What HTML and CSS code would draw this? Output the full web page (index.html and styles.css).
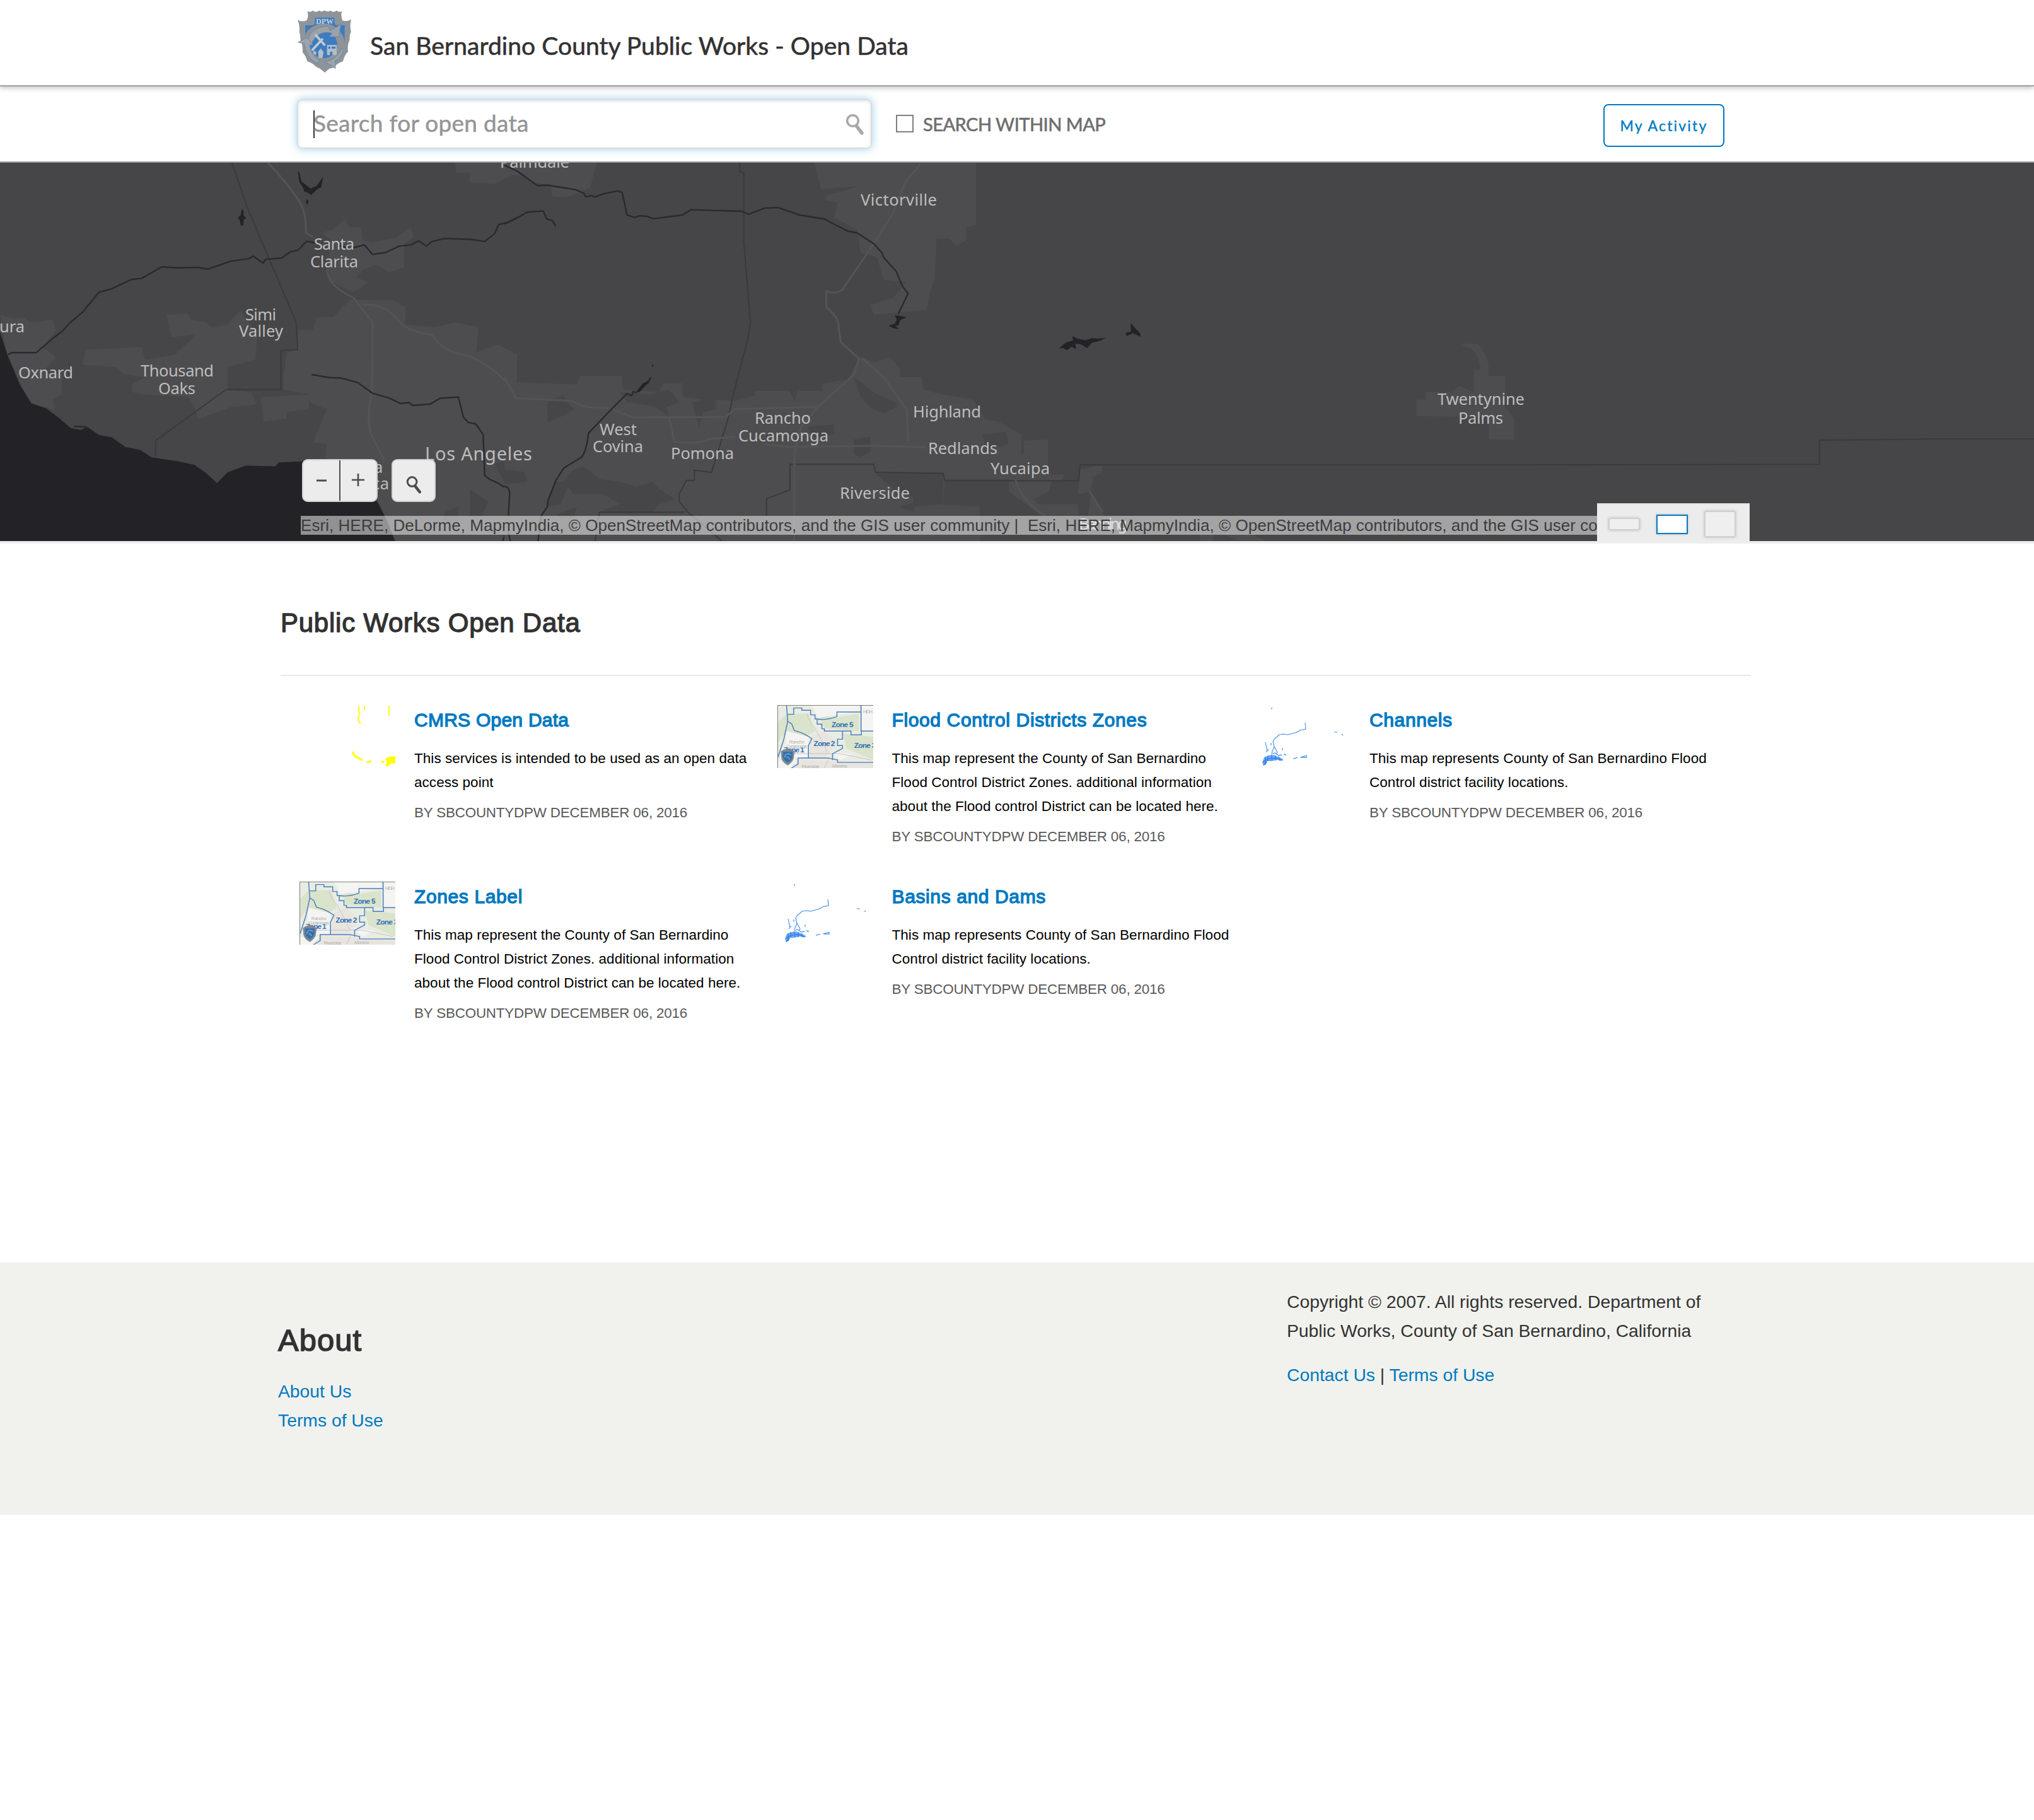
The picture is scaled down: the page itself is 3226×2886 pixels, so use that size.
FILE: index.html
```html
<!DOCTYPE html>
<html lang="en">
<head>
<meta charset="utf-8">
<title>San Bernardino County Public Works - Open Data</title>
<link rel="stylesheet" href="styles.css">
</head>
<body>
<svg class="defs" width="0" height="0" aria-hidden="true">
  <defs>
    <symbol id="badge" viewBox="0 0 330 390">
      <path fill="#8e9499" d="M82 53Q98 60 108 50Q124 62 138 50Q152 60 165 49Q178 60 192 50Q206 62 222 50Q232 60 247 54Q240 76 250 98Q272 104 291 92Q283 122 290 150Q282 168 284 190Q272 212 276 246Q258 262 252 292Q226 300 206 322Q184 324 166 346Q148 326 124 318Q108 300 82 292Q76 266 60 250Q62 216 50 190Q50 168 44 150Q48 122 36 94Q58 108 80 96Q90 76 82 53Z"/>
      <path fill="#3d7cc0" d="M118 84H212V108Q212 120 226 120H260V200Q254 270 166 312Q78 270 72 200V120H104Q118 120 118 108Z"/>
      <circle cx="160" cy="212" r="82" fill="none" stroke="#8e9499" stroke-width="36"/>
      <circle cx="160" cy="212" r="64" fill="#3d7cc0"/>
      <path fill="#9da3a8" stroke="#4f7fb3" stroke-width="2" d="M84 190Q102 128 180 124L192 146L242 116L232 176L186 174L200 158Q130 140 100 214Z"/>
      <path fill="#9da3a8" stroke="#4f7fb3" stroke-width="2" d="M38 202L78 178L112 214L92 214Q98 262 140 286L128 302Q76 274 68 208Z"/>
      <path fill="#9da3a8" stroke="#4f7fb3" stroke-width="2" d="M168 294Q226 282 246 230L254 236Q246 272 216 288V326Q194 310 168 294Z"/>
      <path stroke="#c3cad0" stroke-width="11" d="M120 164L166 216M156 184L104 240"/>
      <path fill="#b4bec8" d="M134 246L146 230L160 248L154 276H136ZM176 214H222V262H202V246H190V262H176ZM112 240L126 248L122 262L110 254Z"/>
      <path fill="#3d7cc0" d="M182 222H192V232H182ZM198 222H216V232H198Z"/>
      <text x="165" y="115" class="badge-text" text-anchor="middle">DPW</text>
    </symbol>
    <symbol id="lens" viewBox="0 0 30 34">
      <circle cx="11.5" cy="11.5" r="8.8" fill="none" stroke="currentColor" stroke-width="3.6"/>
      <path d="M17.5 20L26 31" fill="none" stroke="currentColor" stroke-width="5.4" stroke-linecap="round"/>
    </symbol>
    <symbol id="zones" viewBox="0 0 306 218" preserveAspectRatio="none">
      <rect width="306" height="218" fill="#e9ece2"/>
      <path fill="#dae3cb" d="M0 60L30 30L100 30L120 90L90 110L30 90L0 130ZM210 100L306 110V190L220 150ZM130 30L180 45L260 30V90L150 80Z"/>
      <path fill="#f4f4f2" d="M110 0H260V22L130 44ZM30 90L100 110V180L20 185ZM270 0H306V90H270ZM170 160L240 170L200 190ZM0 190H60V218H0Z"/>
      <path fill="#e8e5df" d="M104 110L150 90L190 130L150 185L104 182ZM70 188L306 200V218H40Z"/>
      <path fill="none" stroke="#c9bfd0" stroke-width="2" d="M95 30Q100 60 120 80L140 120L160 165M30 168H200L300 190M150 218L165 180"/>
      <path fill="none" stroke="#4a7fc0" stroke-width="3" d="M29 0L33 56L20 120L2 180M33 32H52V10H78V18H106V34H120V48H127V66H142V82H150V90H235V103H268V90M127 48Q150 54 190 40V24H267M267 0V90H306M33 56L46 66L54 88L78 96L92 104L110 116L99 140V183M208 90V118H192V140H208V150L176 168V190M45 218L66 204V183H160L192 190V198H306"/>
      <path d="M0 1H306M1 0V218" stroke="#777" stroke-width="2"/>
      <text x="173" y="77" class="zone" textLength="70">Zone 5</text>
      <text x="116" y="142" class="zone" textLength="68">Zone 2</text>
      <text x="245" y="148" class="zone" textLength="70">Zone 3</text>
      <text x="20" y="164" class="zone" textLength="66">Zone 1</text>
      <text x="38" y="134" class="place" textLength="48">Rancho</text>
      <text x="28" y="148" class="place" textLength="66">Cucamonga</text>
      <text x="78" y="217" class="place" textLength="56">Riverside</text>
      <text x="175" y="216" class="place" textLength="48">Moreno</text>
      <text x="274" y="28" class="place" textLength="30">HIGH</text>
      <path fill="#7c8790" d="M11 160L20 154L33 150L46 154L55 160L52 184Q48 198 33 209Q16 198 13 184Z"/>
      <path fill="#2f71b4" d="M18 162H48V180Q44 194 33 199Q20 192 18 180Z"/>
      <path fill="none" stroke="#8fa3b5" stroke-width="3" d="M24 182Q22 170 34 168L44 172M30 178L40 188"/>
    </symbol>
    <symbol id="channels" viewBox="0 0 152 100">
      <path fill="none" stroke="#3d8bf0" stroke-width="1.1" d="M27 4V7M80 28L81 38L72 40L67 43L60 45L52 47L46 46L39 47L36 50L31 54L29 58L31 66L27 76M31 66L36 75L34 78M17 59L18 64L20 72L18 75L22 70M26 60V64M44 68V72M126 43H131M138 46L140 48"/>
      <path fill="none" stroke="#4d94f2" stroke-width="1.3" d="M26 78L32 76L38 80L43 79M46 78L50 79M61 85L68 83M72 83L82 80V83L74 83"/>
      <path fill="#6ba7f6" d="M15 83L22 80L30 79L37 82L42 84L46 87L40 88L36 87L26 89L20 89L18 94L14 96L12 91Z"/>
      <path stroke="#2676e6" stroke-width="1.1" fill="none" d="M17 82V94M21 80V89M26 79L28 88M33 80V88M38 82L40 88M13 90L22 85L34 84L44 88M14 95L19 90"/>
    </symbol>
    <symbol id="cmrs" viewBox="0 0 152 100">
      <path fill="none" stroke="#ffff00" stroke-width="1.8" d="M94 1V10L96 14L93 20L94 26L97 30M103 1V8M142 1V17"/>
      <path fill="none" stroke="#ffff00" stroke-width="3" d="M84 74L87 80L93 84L100 87M107 91L114 89M130 90H134"/>
      <path fill="#ffff00" d="M136 85L142 82L152 81V92L144 93L139 98L136 95L139 91Z"/>
    </symbol>
  </defs>
</svg>

<header class="site-header">
  <svg class="logo"><use href="#badge"/></svg>
  <h1 class="site-title">San Bernardino County Public Works - Open Data</h1>
</header>

<section class="search-bar">
  <div class="search-box">
    <span class="caret"></span>
    <span class="placeholder">Search for open data</span>
    <svg class="search-icon"><use href="#lens"/></svg>
  </div>
  <label class="within"><span class="checkbox"></span><span class="within-text">SEARCH WITHIN MAP</span></label>
  <a class="activity">My Activity</a>
</section>

<section class="map">
  <svg class="map-canvas" viewBox="0 258 3226 600">
    <!-- western tile -->
    <g transform="translate(0 250) scale(.523 .3954)">
      <path class="urban" d="M0 630L40 645L70 640L90 660L160 650L170 690L130 760L170 800L130 860L190 870L185 950L160 970L165 1010L90 985L20 780ZM505 630L570 625L580 650L625 660L640 680L690 670L730 610L780 710L775 810L690 840L690 930L760 940L780 990L700 1000L600 1050L590 1000L570 960L440 950L400 940L400 910L440 880L380 870L350 840L250 830L260 770L430 760L440 810L530 790L580 730L590 710L520 720ZM790 960L940 950L935 1010L870 1020V1045L800 1060ZM950 690L960 640L1010 640L1060 570L1190 570L1230 600L1230 670L1320 680L1380 660L1450 680L1445 780L1510 750L1568 790V1538H1200L1145 1380V1209H985L990 1150L950 1140L990 1010L940 980L940 950L860 930V880L870 780L900 770L905 690ZM975 300L1010 290L1045 245L1060 280L1095 280L1100 330L1130 340L1200 320L1245 280L1255 320L1225 345L1225 440L1180 460L1140 430L1100 450L1080 480L1120 500L1070 540L1010 500L985 440L1010 340ZM1380 20H1568V60L1500 105L1425 100V60H1385Z"/>
      <path class="hill" d="M1425 1330L1480 1380L1460 1440L1425 1440ZM1350 1420L1390 1400V1460H1340ZM1500 1230L1568 1200V1290L1530 1300Z"/>
      <path class="water" d="M0 700L15 760L25 800L60 910L95 985L140 1005L180 1045L215 1085L245 1092L265 1080L300 1112L340 1122L380 1160L425 1172L460 1202L540 1218L590 1232L625 1265L658 1305L690 1262L745 1235L835 1238L845 1222L920 1218L1010 1290L1145 1380L1175 1460L1198 1538H0Z"/>
      <path class="water" d="M903 55L908 60L914 95L942 124L960 114L980 76L974 120L964 124L944 150L932 140L922 136L920 122L908 98ZM733 205L740 215L738 230L746 242L739 250L738 272L730 272L727 250L721 242L730 230ZM930 165L936 175L932 190L928 180Z"/>
      <path class="border" d="M703 20L750 200L898 660L903 770L852 774V930H685L472 1135V1200"/>
      <path class="road" d="M812 20Q870 100 905 170Q928 210 928 300L950 320M990 450Q1000 520 1070 560L1130 660L1128 940Q1110 1050 1125 1110L1165 1210M1100 590Q1170 580 1220 670Q1250 700 1310 710Q1340 780 1420 795Q1500 840 1540 910L1568 950"/>
      <path class="river" d="M25 790L35 782H110L160 725L190 695L210 665L250 620L300 540L340 525L400 488L430 484L490 438L540 442L600 440L630 447L700 415L755 405L768 395L798 423L805 408L855 402L880 378L905 370L930 335L955 342M1030 352L1060 365L1105 350L1130 388L1170 380L1210 355L1245 350L1270 334L1293 355L1310 336L1350 324L1430 328L1470 336L1500 305L1512 268L1540 260L1568 240M945 870L1000 882L1035 884L1085 902L1130 945L1180 964L1215 986L1240 982L1252 994L1305 988L1335 965L1390 960L1405 1040L1420 1062L1443 1068L1465 1110L1470 1275L1485 1290Q1540 1320 1545 1350L1535 1500L1524 1538M225 1078L262 1080"/>
    </g>
    <!-- central tile -->
    <g transform="translate(800 250) scale(.523 .3954)">
      <path class="urban" d="M0 20H280L260 120L190 160L145 155L140 110L90 100L60 70H0ZM940 20H1430V270L1400 280V330L1370 355L1350 325L1310 325L1305 485L1290 540L1280 610L1200 620L1120 630L1110 590L1180 560L1220 500L1150 490L1130 400L1080 380L1070 290L1000 240L1010 180L970 170L980 150L1075 115L960 125ZM0 830L20 850L20 900L220 910L230 875H355L360 930L470 940L480 905H540V960L600 970L700 975L760 955V935H865L880 980L890 935H965V905L1040 890L1080 800L1120 820L1170 800L1200 850L1200 880L1265 880L1270 930L1330 950L1420 970L1460 1050L1500 1060L1568 1110V1290H1335L1330 1390L1440 1400L1445 1538H0Z"/>
      <path class="hill" d="M180 1300L210 1250L240 1240L290 1290L350 1300L400 1320L450 1300L470 1330L520 1370L470 1390L450 1420H290L350 1390L300 1350L210 1350ZM1060 880L1130 950L1190 980L1190 1000L1150 1025L1110 1000L1080 960ZM1125 1265L1330 1265V1390L1240 1400L1240 1360L1190 1340ZM130 980L180 950L190 980L210 1010L170 1040L130 1060ZM920 1080L1000 1070L1000 1110L930 1120ZM1060 1130L1110 1120L1110 1180L1080 1200L1060 1190ZM350 940L440 950L500 930L530 980L490 1000L500 1040L460 1000L370 980ZM1450 1110L1520 1100L1530 1150L1460 1170ZM570 980L640 960L640 1010L605 1020L590 1080ZM150 1300L200 1300L170 1390L130 1400ZM160 1430L220 1400L210 1440L170 1450ZM0 1250L60 1260L70 1300L0 1310ZM1200 1400L1250 1380L1240 1420Z"/>
      <path class="border" d="M714 20V55L726 62V340L746 660L740 720Q690 960 680 1040L628 1262L576 1254V1294H552L530 1350V1378L555 1420L660 1538M288 1422H545M288 1422L275 1538M795 1436V1368L866 1332V1230H1120L1126 1262L1330 1266L1336 1296H1568"/>
      <path class="road" d="M1262 25L1215 100L1180 220L1120 345L1025 530Q1000 550 976 535V600Q1005 630 1012 660Q1015 700 1020 740L1075 805L1060 870L950 1000L900 1080L880 1180L878 1538M1085 805L1150 880L1220 1010L1225 1140M0 880L35 965L200 975L250 1000L320 1005L390 1042L670 1040L700 1008L950 1000M500 1045L515 1140Q600 1150 620 1128L700 1120M790 1150L860 1160L1130 1155L1280 1162"/>
      <path class="river" d="M0 30L40 55L100 112L130 110L215 128L240 142L248 158L262 152L275 158L300 145L345 133L357 140L372 230L395 240L410 233L435 236L450 245L540 230L565 209L720 215L740 227L790 202L830 200L895 230L970 246L1040 294L1070 302L1120 345L1145 382L1150 400L1188 456L1207 515L1224 545L1194 628M0 265L30 248L70 218L118 214L128 246L145 252L156 275M448 830L451 838M444 880L435 905L420 910L400 942L390 938L386 955L372 946L320 1015L255 1105Q250 1170 235 1200L180 1245L158 1290L132 1375L130 1400L112 1436L102 1538M0 1318Q15 1320 16 1345L12 1436M18 1538L12 1500"/>
      <path class="water" d="M1184 632L1205 636L1220 640L1200 652L1196 672L1186 676L1198 688L1180 684L1165 674L1184 666L1190 650ZM420 905L432 898L440 886L430 912L408 942L404 936Z"/>
    </g>
    <!-- eastern tiles -->
    <g transform="translate(1600 250) scale(.523 .3954)">
      <path class="urban" d="M0 1100L25 1110L20 1180L45 1190V1135L118 1130V1220L125 1270H170L160 1296H0ZM0 1296H130L120 1340L75 1370L90 1390H210V1436H100L0 1340ZM215 1250L285 1232L280 1265L255 1280L250 1340L210 1350ZM250 1340L290 1436H240ZM1370 750L1400 745L1425 750Q1455 800 1455 840V875H1505V1000L1532 1045V1130H1456V1040L1236 1036V970H1265V940H1340L1365 915L1410 940V850H1430Q1425 790 1400 765Z"/>
      <path class="urban" d="M580 1470L620 1480V1538H580ZM650 1510L740 1510L780 1538H700Z"/>
      <path class="border" d="M0 1296H212L216 1232H1100L1500 1232L2459 1230V1133L2700 1130L2800 1128H3120"/>
      <path class="road" d="M20 1290Q40 1380 110 1436M245 1340L285 1420"/>
      <path class="water" d="M152 765L172 742L195 732L192 715L208 726L232 732L252 724L270 726L294 722L278 734L252 742L238 764L218 748L202 746L204 768L190 758L176 772L164 764ZM370 663L382 682L398 704L400 718L376 704L358 716L354 702L370 698Z"/>
    </g>
    <g class="labels">
      <text x="793" y="266" textLength="110">Palmdale</text>
      <text x="1365" y="326" textLength="121">Victorville</text>
      <text x="498" y="396" textLength="64">Santa</text>
      <text x="492" y="424" textLength="76">Clarita</text>
      <text x="389" y="508" textLength="49">Simi</text>
      <text x="379" y="534" textLength="70">Valley</text>
      <text x="-1" y="527" textLength="40">ura</text>
      <text x="29" y="600" textLength="87">Oxnard</text>
      <text x="223" y="597" textLength="116">Thousand</text>
      <text x="251" y="625" textLength="59">Oaks</text>
      <text x="674" y="730" textLength="170" class="city">Los Angeles</text>
      <text x="593" y="750">a</text>
      <text x="590" y="776" textLength="27">ca</text>
      <text x="951" y="690" textLength="59">West</text>
      <text x="940" y="717" textLength="80">Covina</text>
      <text x="1064" y="728" textLength="100">Pomona</text>
      <text x="1197" y="672" textLength="89">Rancho</text>
      <text x="1171" y="700" textLength="143">Cucamonga</text>
      <text x="1448" y="662" textLength="108">Highland</text>
      <text x="1472" y="720" textLength="110">Redlands</text>
      <text x="1571" y="752" textLength="94">Yucaipa</text>
      <text x="1332" y="791" textLength="111">Riverside</text>
      <text x="2280" y="642" textLength="138">Twentynine</text>
      <text x="2313" y="672" textLength="71">Palms</text>
      <text x="1711" y="840" textLength="77">Banning</text>
    </g>
  </svg>
  <div class="zoom-controls">
    <div class="zoom-pair">
      <span class="zoom-btn"><svg width="24" height="24" viewBox="0 0 24 24"><path d="M4 12H20" stroke="#4c4c4c" stroke-width="3"/></svg></span>
      <span class="zoom-btn"><svg width="24" height="24" viewBox="0 0 24 24"><path d="M1 11H21M11 1V21" stroke="#4c4c4c" stroke-width="2.6"/></svg></span>
    </div>
    <span class="locate"><svg class="locate-icon"><use href="#lens"/></svg></span>
  </div>
  <div class="map-foot">
    <div class="attribution">Esri, HERE, DeLorme, MapmyIndia, © OpenStreetMap contributors, and the GIS user community |&nbsp; Esri, HERE, MapmyIndia, © OpenStreetMap contributors, and the GIS user co</div>
    <div class="size-panel">
      <span class="size small"></span>
      <span class="size medium"></span>
      <span class="size large"></span>
    </div>
  </div>
</section>

<main class="content">
  <h2 class="section-title">Public Works Open Data</h2>
  <div class="cards">
    <article class="card">
      <svg class="thumb"><use href="#cmrs"/></svg>
      <div class="card-body">
        <h3 class="card-title tight">CMRS Open Data</h3>
        <p class="card-text">This services is intended to be used as an open data access point</p>
        <p class="card-meta">BY SBCOUNTYDPW DECEMBER 06, 2016</p>
      </div>
    </article>
    <article class="card">
      <svg class="thumb"><use href="#zones"/></svg>
      <div class="card-body">
        <h3 class="card-title">Flood Control Districts Zones</h3>
        <p class="card-text">This map represent the County of San Bernardino Flood Control District Zones. additional information about the Flood control District can be located here.</p>
        <p class="card-meta">BY SBCOUNTYDPW DECEMBER 06, 2016</p>
      </div>
    </article>
    <article class="card">
      <svg class="thumb"><use href="#channels"/></svg>
      <div class="card-body">
        <h3 class="card-title">Channels</h3>
        <p class="card-text">This map represents County of San Bernardino Flood Control district facility locations.</p>
        <p class="card-meta">BY SBCOUNTYDPW DECEMBER 06, 2016</p>
      </div>
    </article>
    <article class="card">
      <svg class="thumb"><use href="#zones"/></svg>
      <div class="card-body">
        <h3 class="card-title">Zones Label</h3>
        <p class="card-text">This map represent the County of San Bernardino Flood Control District Zones. additional information about the Flood control District can be located here.</p>
        <p class="card-meta">BY SBCOUNTYDPW DECEMBER 06, 2016</p>
      </div>
    </article>
    <article class="card">
      <svg class="thumb"><use href="#channels"/></svg>
      <div class="card-body">
        <h3 class="card-title">Basins and Dams</h3>
        <p class="card-text">This map represents County of San Bernardino Flood Control district facility locations.</p>
        <p class="card-meta">BY SBCOUNTYDPW DECEMBER 06, 2016</p>
      </div>
    </article>
  </div>
</main>

<footer class="footer">
  <div class="footer-about">
    <h2 class="footer-title">About</h2>
    <a class="link">About Us</a>
    <a class="link">Terms of Use</a>
  </div>
  <div class="footer-legal">
    <p>Copyright © 2007. All rights reserved. Department of Public Works, County of San Bernardino, California</p>
    <p class="legal-links"><a class="link">Contact Us</a> | <a class="link">Terms of Use</a></p>
  </div>
</footer>
</body>
</html>
```
FILE: styles.css
```css
* { box-sizing: border-box; }
body {
  margin: 0;
  background: #fff;
  color: #323232;
  font-family: "Liberation Sans", Arial, sans-serif;
}
h1, h2, h3, p { margin: 0; font-weight: 400; }
.defs { display: block; height: 0; }
.badge-text { font: bold 36px "Liberation Serif", serif; fill: #c9d0d6; }
.zone { font: bold 24px "Liberation Sans", sans-serif; fill: #2f6fb5; }
.place { font: 15px "Liberation Sans", sans-serif; fill: #b0b0b0; }

.site-header {
  display: flex;
  height: 137px;
  padding-left: 460px;
  border-bottom: 2px solid #a3a3a3;
  box-shadow: 0 2px 8px rgba(0, 0, 0, .28);
  position: relative;
}
.logo { width: 110px; height: 130px; }
.site-title {
  margin: 45px 0 0 17px;
  font: 400 39px/54px Lato, sans-serif;
  letter-spacing: .06px;
  white-space: nowrap;
  -webkit-text-stroke: .6px #323232;
}

.search-bar {
  display: flex;
  align-items: center;
  height: 119px;
  padding: 0 491px 0 471px;
}
.search-box {
  display: flex;
  align-items: center;
  width: 912px;
  height: 79px;
  padding: 0 10px 0 24px;
  border: 2px solid #dcdcdc;
  border-radius: 8px;
  box-shadow: 0 0 14px rgba(81, 167, 232, .55), inset 0 2px 5px rgba(0, 0, 0, .1);
}
.caret { width: 2px; height: 44px; background: #333; }
.placeholder {
  flex: 1;
  margin: -3px 0 0 -2px;
  font: 37px/44px Lato, sans-serif;
  letter-spacing: .3px;
  color: #959595;
  -webkit-text-stroke: .5px #959595;
}
.search-icon { width: 30px; height: 34px; color: #a8a8a8; }
.within { display: flex; align-items: center; gap: 15px; margin-left: 38px; }
.checkbox { width: 28px; height: 28px; border: 2px solid #7f7f7f; margin-top: -2px; }
.within-text {
  font: 29px/36px Lato, sans-serif;
  letter-spacing: -.5px;
  color: #6e6e6e;
  -webkit-text-stroke: .6px #6e6e6e;
}
.activity {
  margin: 4px 0 0 auto;
  width: 192px;
  height: 68px;
  border: 2px solid #007ac2;
  border-radius: 8px;
  color: #007ac2;
  font: 23px/65px Lato, sans-serif;
  letter-spacing: 2.2px;
  text-align: center;
  -webkit-text-stroke: .4px #007ac2;
}

.map {
  position: relative;
  height: 606px;
  border-top: 2px solid #9b9b9d;
  border-bottom: 4px solid #eee;
  background: #464648;
}
.map-canvas { display: block; width: 3226px; height: 600px; }
.urban { fill: #4d4d4f; }
.hill { fill: #464648; }
.water { fill: #232227; }
.border, .road, .river { fill: none; vector-effect: non-scaling-stroke; stroke-linejoin: round; }
.border { stroke: #3a3a3c; stroke-width: 2; }
.road { stroke: #545456; stroke-width: 3; }
.river { stroke: #2a2a2e; stroke-width: 2.4; }
.labels { font: 25.5px "Noto Sans", "Open Sans", sans-serif; fill: #bdbdbe; }
.labels .city { font-size: 29px; }

.zoom-controls { position: absolute; left: 479px; top: 470px; display: flex; gap: 22px; }
.zoom-pair, .locate {
  display: flex;
  height: 68px;
  background: #ececec;
  border: 2px solid #d2d2d2;
  border-radius: 9px;
}
.zoom-pair { width: 120px; }
.zoom-btn { flex: 1; display: flex; align-items: center; justify-content: center; }
.zoom-btn + .zoom-btn { border-left: 2px solid #4c4c4c; }
.locate { width: 70px; align-items: center; justify-content: center; padding-top: 12px; }
.locate-icon { width: 25px; height: 29px; color: #4c4c4c; }

.map-foot {
  position: absolute;
  left: 477px;
  bottom: 0;
  display: flex;
  align-items: flex-end;
  width: 2298px;
}
.attribution {
  flex: 1;
  min-width: 0;
  margin-bottom: 10px;
  overflow: hidden;
  white-space: nowrap;
  background: rgba(255, 255, 255, .5);
  color: #3c3c3e;
  font-size: 26px;
  line-height: 30px;
  letter-spacing: .045px;
}
.size-panel {
  display: flex;
  align-items: center;
  justify-content: space-between;
  width: 242px;
  height: 60px;
  padding: 4px 22px 0 18px;
  background: #ececec;
  border-top: 2px solid #e2e2e2;
}
.size { width: 50px; background: #efefef; border: 2px solid #d0d0d0; box-shadow: 0 0 4px rgba(0, 0, 0, .2); }
.small { height: 20px; border-radius: 4px; }
.medium { height: 31px; background: #fff; border-color: #007ac2; }
.large { height: 42px; border-radius: 3px; }

.content { height: 1140px; padding: 96px 449px 0 445px; }
.section-title {
  height: 114px;
  border-bottom: 2px solid #e9e9e9;
  font-size: 42px;
  line-height: 60px;
  letter-spacing: .75px;
  -webkit-text-stroke: 1.3px #323232;
}
.cards {
  display: grid;
  grid-template-columns: repeat(3, 757.5px);
  grid-auto-rows: 280px;
  padding: 46px 0 0 30px;
}
.card { display: flex; gap: 30px; }
.thumb { flex: none; width: 152px; height: 100px; overflow: hidden; }
.card-body { width: 546px; padding-top: 4px; }
.card-title {
  font-size: 30px;
  line-height: 40px;
  letter-spacing: .62px;
  color: #0079c1;
  -webkit-text-stroke: 1.3px #0079c1;
}
.card-title.tight { letter-spacing: .25px; }
.card-text { margin-top: 22px; font-size: 22.5px; line-height: 38px; letter-spacing: .04px; color: #000; }
.card-meta { margin-top: 10px; font-size: 22.4px; line-height: 38px; letter-spacing: -.18px; color: #595959; }

.footer {
  display: flex;
  justify-content: space-between;
  height: 400px;
  padding: 0 506px 0 441px;
  background: #f1f2ed;
  font-size: 28.3px;
  line-height: 46px;
}
.footer-about { display: flex; flex-direction: column; padding-top: 93px; }
.footer-title { margin-bottom: 28px; font-size: 49px; line-height: 60px; letter-spacing: 1px; -webkit-text-stroke: 1.5px #323232; }
.footer-legal { width: 679px; padding-top: 39px; }
.legal-links { margin-top: 24px; }
.link { color: #0079c1; }
```
